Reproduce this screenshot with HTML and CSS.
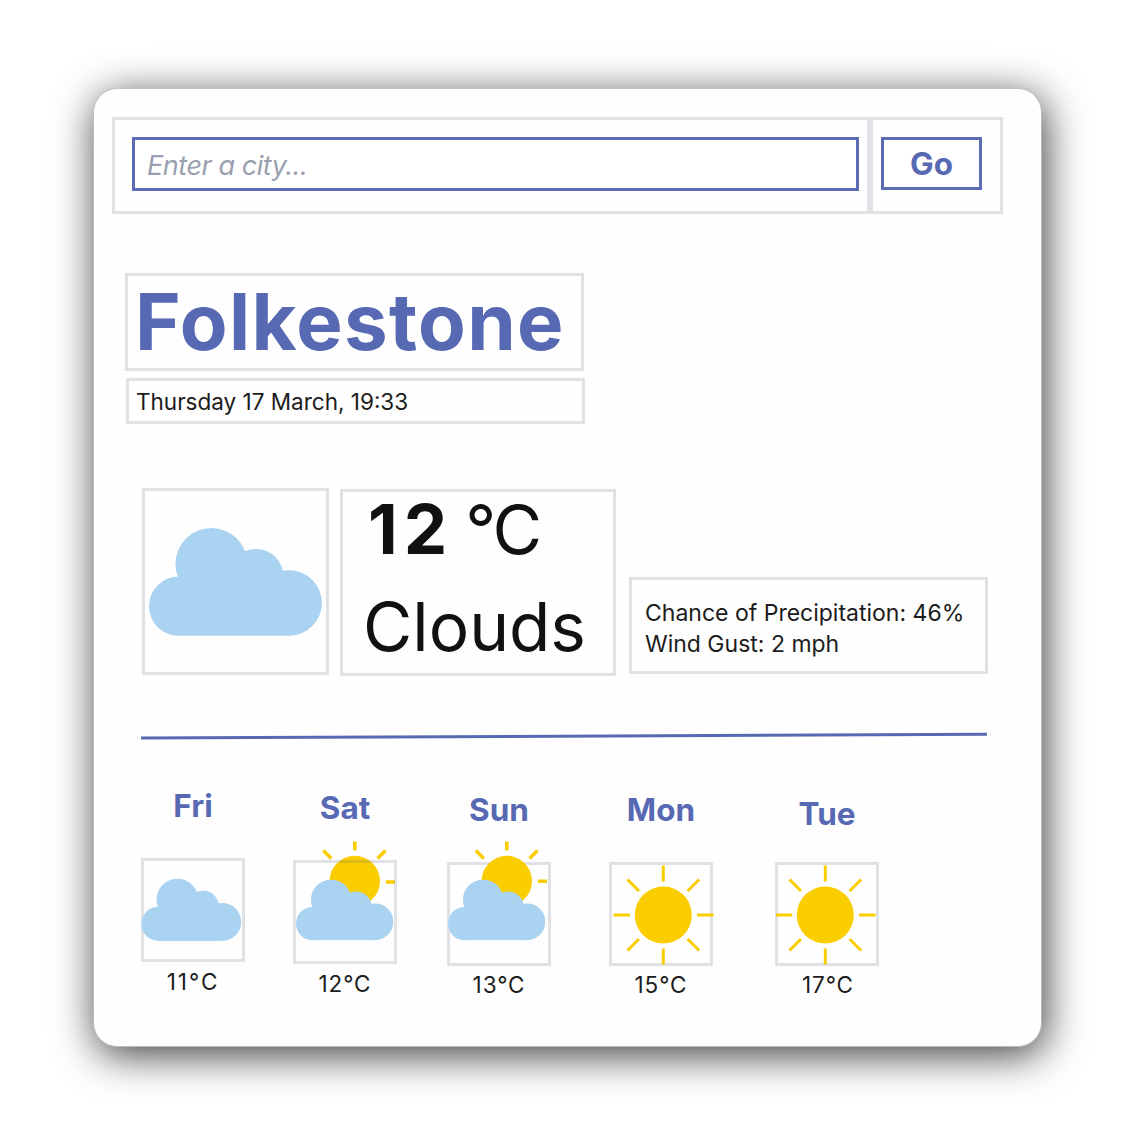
FILE: index.html
```html
<!DOCTYPE html>
<html lang="en">
<head>
<meta charset="utf-8">
<title>Weather</title>
<link rel="stylesheet" href="styles.css">
</head>
<body>
<svg class="defs" aria-hidden="true">
  <symbol id="cloud" viewBox="0 0 173 108">
    <circle cx="29.6" cy="78.2" r="29.6"/>
    <circle cx="62.4" cy="36" r="36"/>
    <circle cx="107" cy="48.5" r="27.5"/>
    <circle cx="140.2" cy="75" r="32.7"/>
    <path d="M29.6 107.8V50l30-14 47 12 33 20v39.8z"/>
  </symbol>
</svg>
<main class="card">
  <form class="search">
    <div class="frame search-field"><input class="input" type="text" placeholder="Enter a city..."></div>
    <div class="frame search-action"><button class="go" type="button">Go</button></div>
  </form>
  <header class="place">
    <h1 class="frame city">Folkestone</h1>
    <p class="frame date">Thursday 17 March, 19:33</p>
  </header>
  <section class="now">
    <div class="frame now-icon">
      <svg class="cloud-large"><use href="#cloud"/></svg>
    </div>
    <div class="frame condition">
      <p class="degrees"><strong>12</strong><span class="unit">°C</span></p>
      <p class="summary">Clouds</p>
    </div>
    <div class="frame details"><p class="rain">Chance of Precipitation: 46%</p><p class="wind">Wind Gust: 2 mph</p></div>
  </section>
  <svg class="divider" viewBox="0 0 846 8"><path d="M0 6L846 2.3"/></svg>
  <section class="forecast">
    <article class="day fri">
      <h2>Fri</h2>
      <div class="tile"><svg class="icon" viewBox="0 0 104 104"><use class="cloud" href="#cloud" x="0.3" y="20.6" width="100" height="62.4"/></svg></div>
      <p>11°C</p>
    </article>
    <article class="day sat">
      <h2>Sat</h2>
      <div class="tile"><svg class="icon" viewBox="0 0 104 104">
        <circle class="sun" cx="61.8" cy="21" r="25.2"/>
        <path class="rays" d="M61.8-18.5v9M93 22h9M30.3-9.5l8 8M84.5-1.5l8-8"/>
        <use class="cloud" href="#cloud" x="3" y="19.6" width="97.4" height="60.8"/></svg></div>
      <p>12°C</p>
    </article>
    <article class="day sun-day">
      <h2>Sun</h2>
      <div class="tile"><svg class="icon" viewBox="0 0 104 104">
        <circle class="sun" cx="59.8" cy="19" r="25.2"/>
        <path class="rays" d="M59.8-20.5v9M91 19.3h9M28.8-11.5l8 8M82.5-3.5l8-8"/>
        <use class="cloud" href="#cloud" x="1" y="17.6" width="97.4" height="60.8"/></svg></div>
      <p>13°C</p>
    </article>
    <article class="day mon">
      <h2>Mon</h2>
      <div class="tile"><svg class="icon" viewBox="0 0 104 104">
        <circle class="sun" cx="54.3" cy="53" r="28.5"/>
        <path class="rays" d="M54.3 3.5v16M54.3 86.5v16M4.5 53h16.5M88 53h16.5M18.5 17.5l11.5 11.5M78.6 29l11.5-11.5M18.5 88.5l11.5-11.5M78.6 77l11.5 11.5"/></svg></div>
      <p>15°C</p>
    </article>
    <article class="day tue">
      <h2>Tue</h2>
      <div class="tile"><svg class="icon" viewBox="0 0 104 104">
        <circle class="sun" cx="50.3" cy="53" r="28.5"/>
        <path class="rays" d="M50.3 3.5v16M50.3 86.5v16M.8 53h16.5M84 53h16.5M14.5 17.5l11.5 11.5M74.6 29l11.5-11.5M14.5 88.5l11.5-11.5M74.6 77l11.5 11.5"/></svg></div>
      <p>17°C</p>
    </article>
  </section>
</main>
</body>
</html>
```
FILE: styles.css
```css
* { box-sizing: border-box; margin: 0; padding: 0; }
body {
  height: 1134px;
  padding: 88px 0 0 93px;
  overflow: hidden;
  background: #fff;
  color: #111;
  font-family: Inter, "Liberation Sans", sans-serif;
}
p, h1, h2 { white-space: nowrap; }
.defs { display: none; }
.card {
  width: 949px;
  height: 959px;
  padding: 28px 0 0 18px;
  border: 1px solid #bbb;
  border-top-color: #c4c4c4;
  border-radius: 24px;
  background: #fefefe;
  box-shadow: 3px 8px 42px rgba(0, 0, 0, .76);
}
.frame { border: 3px solid #e0e1e4; }

.search { display: flex; }
.search-field { width: 758px; height: 97px; padding: 17px 0 0 17px; }
.search-action { width: 133px; height: 97px; padding: 17px 0 0 8px; }
.input {
  display: block;
  width: 727px;
  height: 54px;
  padding: 2px 12px 0;
  border: 3px solid #5b6cb5;
  background: #fff;
  font: italic 400 27px Inter, sans-serif;
  letter-spacing: -.45px;
}
.input::placeholder { color: #9a9fb0; opacity: 1; }
.go {
  display: block;
  width: 101px;
  height: 53px;
  border: 3px solid #5b6cb5;
  background: #fff;
  color: #5869b3;
  font: 700 31.5px/46px Inter, sans-serif;
}

.place { width: 459px; margin: 59px 0 0 13px; }
.city {
  height: 98px;
  padding-left: 7px;
  color: #5869b3;
  font-size: 78px;
  font-weight: 700;
  letter-spacing: 1.3px;
  line-height: 92px;
}
.date {
  width: 459px;
  height: 46px;
  margin: 7px 0 0 1px;
  padding-left: 7px;
  color: #1c1c1c;
  font-size: 22.5px;
  line-height: 41px;
}

.now { display: flex; align-items: flex-start; margin: 64px 0 0 30px; }
.now-icon { width: 187px; height: 187px; padding: 37px 0 0 4px; }
.cloud-large { display: block; width: 173px; height: 108px; fill: #aad3f2; }
.condition { width: 276px; height: 187px; margin: 1px 0 0 11px; padding-left: 20px; font-size: 69px; }
.degrees { display: flex; align-items: baseline; height: 76px; line-height: 74px; }
.degrees strong { margin-left: 5px; font-weight: 700; letter-spacing: 6px; }
.unit { margin-left: 12px; font-size: 68px; letter-spacing: -3px; }
.summary { height: 98px; font-size: 67.5px; line-height: 118px; }
.details {
  width: 359px;
  height: 97px;
  margin: 89px 0 0 13px;
  padding: 18px 0 0 13px;
  color: #1c1c1c;
  font-size: 23px;
  line-height: 31px;
}

.divider { display: block; width: 846px; height: 8px; margin: 56px 0 0 29px; fill: none; stroke: #5869b3; stroke-width: 3; }

.forecast { display: flex; margin: 49px 0 0 29px; }
.day { width: 104px; text-align: center; }
.day h2 { height: 69px; color: #5869b3; font-size: 31.5px; font-weight: 700; line-height: 34px; }
.day p { color: #1c1c1c; font-size: 22.5px; letter-spacing: .9px; line-height: 40px; }
.tile { position: relative; width: 104px; height: 104px; border: 3px solid #e0e1e4; }
.icon { display: block; width: 104px; height: 104px; margin: -3px; overflow: visible; }
.cloud { fill: #aad3f2; }
.sun { fill: #facd00; }
.rays { fill: none; stroke: #facd00; stroke-width: 3; }
.sat .rays, .sun-day .rays { stroke-width: 3.5; }
.fri p { letter-spacing: 2px; }
.sat { margin: 2px 0 0 48px; }
.sat .tile { border-color: transparent; }
.sat .tile::after {
  content: "";
  position: absolute;
  inset: -3px;
  border: 3px solid rgba(100, 106, 122, .19);
}
.sun-day { margin: 4px 0 0 50px; }
.sun-day p, .mon p, .tue p { line-height: 38px; }
.mon { margin: 4px 0 0 58px; }
.tue { margin: 4px 0 0 62px; }
.tue h2 { padding-top: 4px; }
.tue p { padding-left: 2px; }
```
